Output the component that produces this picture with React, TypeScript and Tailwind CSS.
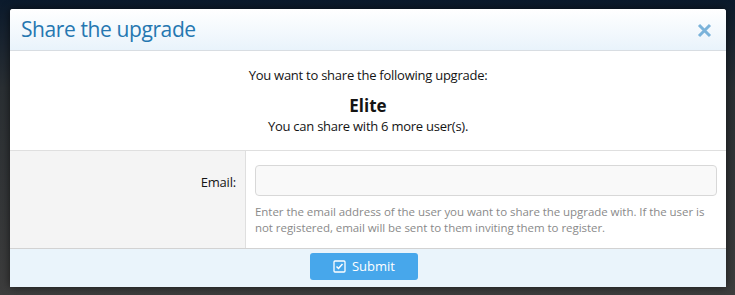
import React from 'react';

const CheckSquare = () => (
  <svg width="13" height="13" viewBox="0 0 13 13" fill="none" stroke="currentColor">
    <rect x="1" y="1" width="11" height="11" rx="1" strokeWidth="1.3" />
    <path d="M3.5 6.5 L5.5 8.5 L9.5 4" strokeWidth="1.5" />
  </svg>
);

export default function App() {
  return (
    <div className="w-[735px] h-[295px] overflow-hidden bg-gradient-to-b from-[#0b1a2c] via-[#2a2f33] via-30% to-[#3d3d3d] pl-[10px] pt-[9px] font-['Open_Sans',sans-serif]">
      <div className="w-[716px] bg-white rounded-t-[3px] shadow-[0_0_8px_rgba(0,0,0,0.6)] overflow-hidden">
        {/* Header */}
        <div className="h-[42px] flex items-center justify-between pl-[11px] pr-[14px] bg-gradient-to-b from-white to-[#e9f3fb] border-b border-[#d8dde2]">
          <h2 className="text-[21px] text-[#2577b1] tracking-[-0.4px]">Share the upgrade</h2>
          <svg width="15" height="15" viewBox="0 0 15 15" className="mt-[2px]">
            <path d="M2 2 L13 13 M13 2 L2 13" stroke="#7bb3da" strokeWidth="3" />
          </svg>
        </div>

        {/* Intro */}
        <div className="text-center text-[#141414] pt-[15px] pb-[15px] border-b border-[#dfdfdf] text-[13px] tracking-[-0.25px]">
          <p className="leading-[18px]">You want to share the following upgrade:</p>
          <p className="text-[17px] font-bold leading-[22px] mt-[11px] tracking-normal">Elite</p>
          <p className="leading-[18px]">You can share with 6 more user(s).</p>
        </div>

        {/* Form row */}
        <div className="flex border-b border-[#d2d2d2]">
          <div className="w-[236px] bg-[#f4f4f4] border-r border-[#dfdfdf] flex justify-end pr-[9px] pt-[22px]">
            <label className="text-[13px] text-[#141414] tracking-[-0.2px]">Email:</label>
          </div>
          <div className="flex-1 pl-[9px] pr-[9px] pt-[14px] pb-[12px]">
            <input
              type="email"
              className="w-full h-[31px] bg-[#f9f9f9] border border-[#d8d8d8] rounded-[4px] outline-none"
            />
            <p className="text-[11.5px] leading-[16px] tracking-[-0.05px] text-[#8a8a8a] mt-[8px] pr-[10px]">
              Enter the email address of the user you want to share the upgrade with. If the user is not registered, email will be sent to them inviting them to register.
            </p>
          </div>
        </div>

        {/* Footer */}
        <div className="h-[38px] bg-[#eaf4fb] flex justify-center pt-[4px] pr-[8px]">
          <button className="w-[108px] h-[27px] bg-[#47a7eb] rounded-[3px] text-white text-[13px] flex items-center justify-center gap-[6px]">
            <CheckSquare />
            <span>Submit</span>
          </button>
        </div>
      </div>
    </div>
  );
}
